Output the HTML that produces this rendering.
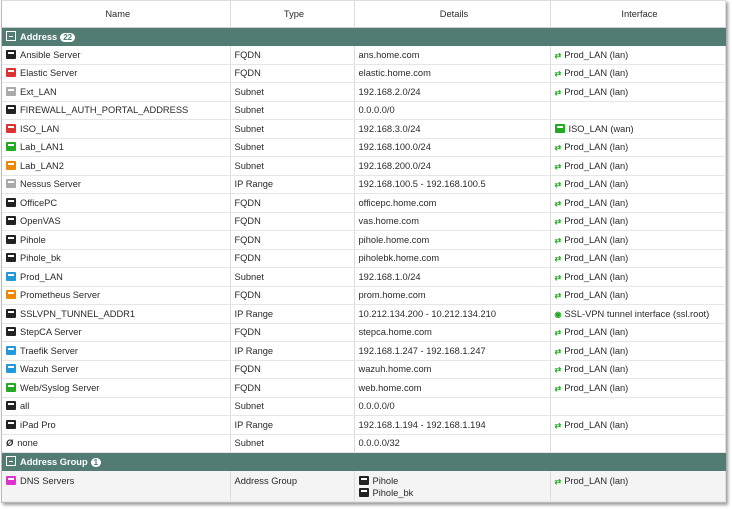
<!DOCTYPE html><html><head><style>
body{margin:0;background:#fff;font-family:"Liberation Sans",sans-serif;font-size:9.3px;color:#2a2a2a;width:732px;height:509px;overflow:hidden}
.wrap{position:absolute;left:1px;top:0;width:723px;height:502px;border:1px solid #bbb;border-top:none;box-shadow:2px 2px 3px #999;background:#fff}
table{border-collapse:collapse;width:723px;table-layout:fixed}
td,th{padding:0 0 0 4px;height:18.5px;border-right:1px solid #ddd;border-bottom:1px solid #e6e6e6;white-space:nowrap;overflow:hidden;box-sizing:border-box}
th{height:27px;font-weight:normal;text-align:center;background:#fff;border-bottom:1px solid #ccc;border-top:1px solid #ddd}
tr.g td{background:#527b74;color:#fff;font-weight:bold;border-color:#527b74;height:18px}
.ic{display:inline-block;width:10px;height:9px;border-radius:1px;vertical-align:-1px;margin-right:4px;position:relative}
.ic:after{content:"";position:absolute;left:2px;top:2px;width:6px;height:2px;background:#fff}
.k{background:#222}.r{background:#d33}.gy{background:#aaa}.gn{background:#2a2}.o{background:#e80}.b{background:#29d}
.sw{color:#2a2;font-weight:bold;margin-right:3px;font-size:8px}
.bd{display:inline-block;background:#fff;color:#527b74;border-radius:6px;padding:0 3px;font-size:8px;line-height:9px;margin-left:3px}
.mi{display:inline-block;width:8px;height:8px;border:1px solid #fff;margin-right:4px;vertical-align:-1px;position:relative;background:#527b74}
.mi:after{content:"";position:absolute;left:2px;top:3.5px;width:4px;height:1px;background:#fff}
tr.d td{background:#f4f4f4;vertical-align:top;padding-top:5px;height:31px}
</style></head><body><div class="wrap"><table>
<colgroup><col style="width:228px"><col style="width:124px"><col style="width:196px"><col style="width:175px"></colgroup>
<tr><th>Name</th><th>Type</th><th>Details</th><th>Interface</th></tr>
<tr class="g"><td colspan="4"><span class="mi"></span>Address<span class="bd">22</span></td></tr>
<tr><td><span class="ic k"></span>Ansible Server</td><td>FQDN</td><td>ans.home.com</td><td><span class="sw">⇄</span>Prod_LAN (lan)</td></tr>
<tr><td><span class="ic r"></span>Elastic Server</td><td>FQDN</td><td>elastic.home.com</td><td><span class="sw">⇄</span>Prod_LAN (lan)</td></tr>
<tr><td><span class="ic gy"></span>Ext_LAN</td><td>Subnet</td><td>192.168.2.0/24</td><td><span class="sw">⇄</span>Prod_LAN (lan)</td></tr>
<tr><td><span class="ic k"></span>FIREWALL_AUTH_PORTAL_ADDRESS</td><td>Subnet</td><td>0.0.0.0/0</td><td></td></tr>
<tr><td><span class="ic r"></span>ISO_LAN</td><td>Subnet</td><td>192.168.3.0/24</td><td><span class="ic gn"></span>ISO_LAN (wan)</td></tr>
<tr><td><span class="ic gn"></span>Lab_LAN1</td><td>Subnet</td><td>192.168.100.0/24</td><td><span class="sw">⇄</span>Prod_LAN (lan)</td></tr>
<tr><td><span class="ic o"></span>Lab_LAN2</td><td>Subnet</td><td>192.168.200.0/24</td><td><span class="sw">⇄</span>Prod_LAN (lan)</td></tr>
<tr><td><span class="ic gy"></span>Nessus Server</td><td>IP Range</td><td>192.168.100.5 - 192.168.100.5</td><td><span class="sw">⇄</span>Prod_LAN (lan)</td></tr>
<tr><td><span class="ic k"></span>OfficePC</td><td>FQDN</td><td>officepc.home.com</td><td><span class="sw">⇄</span>Prod_LAN (lan)</td></tr>
<tr><td><span class="ic k"></span>OpenVAS</td><td>FQDN</td><td>vas.home.com</td><td><span class="sw">⇄</span>Prod_LAN (lan)</td></tr>
<tr><td><span class="ic k"></span>Pihole</td><td>FQDN</td><td>pihole.home.com</td><td><span class="sw">⇄</span>Prod_LAN (lan)</td></tr>
<tr><td><span class="ic k"></span>Pihole_bk</td><td>FQDN</td><td>piholebk.home.com</td><td><span class="sw">⇄</span>Prod_LAN (lan)</td></tr>
<tr><td><span class="ic b"></span>Prod_LAN</td><td>Subnet</td><td>192.168.1.0/24</td><td><span class="sw">⇄</span>Prod_LAN (lan)</td></tr>
<tr><td><span class="ic o"></span>Prometheus Server</td><td>FQDN</td><td>prom.home.com</td><td><span class="sw">⇄</span>Prod_LAN (lan)</td></tr>
<tr><td><span class="ic k"></span>SSLVPN_TUNNEL_ADDR1</td><td>IP Range</td><td>10.212.134.200 - 10.212.134.210</td><td><span class="sw">◉</span>SSL-VPN tunnel interface (ssl.root)</td></tr>
<tr><td><span class="ic k"></span>StepCA Server</td><td>FQDN</td><td>stepca.home.com</td><td><span class="sw">⇄</span>Prod_LAN (lan)</td></tr>
<tr><td><span class="ic b"></span>Traefik Server</td><td>IP Range</td><td>192.168.1.247 - 192.168.1.247</td><td><span class="sw">⇄</span>Prod_LAN (lan)</td></tr>
<tr><td><span class="ic b"></span>Wazuh Server</td><td>FQDN</td><td>wazuh.home.com</td><td><span class="sw">⇄</span>Prod_LAN (lan)</td></tr>
<tr><td><span class="ic gn"></span>Web/Syslog Server</td><td>FQDN</td><td>web.home.com</td><td><span class="sw">⇄</span>Prod_LAN (lan)</td></tr>
<tr><td><span class="ic k"></span>all</td><td>Subnet</td><td>0.0.0.0/0</td><td></td></tr>
<tr><td><span class="ic k"></span>iPad Pro</td><td>IP Range</td><td>192.168.1.194 - 192.168.1.194</td><td><span class="sw">⇄</span>Prod_LAN (lan)</td></tr>
<tr><td><span style="font-style:italic;font-weight:bold;margin-right:4px">Ø</span>none</td><td>Subnet</td><td>0.0.0.0/32</td><td></td></tr>
<tr class="g"><td colspan="4"><span class="mi"></span>Address Group<span class="bd">1</span></td></tr>
<tr class="d"><td><span class="ic" style="background:#d3c"></span>DNS Servers</td><td>Address Group</td><td style="padding-top:4px;line-height:12px"><span class="ic k"></span>Pihole<br><span class="ic k"></span>Pihole_bk</td><td><span class="sw">⇄</span>Prod_LAN (lan)</td></tr>
</table></div></body></html>
